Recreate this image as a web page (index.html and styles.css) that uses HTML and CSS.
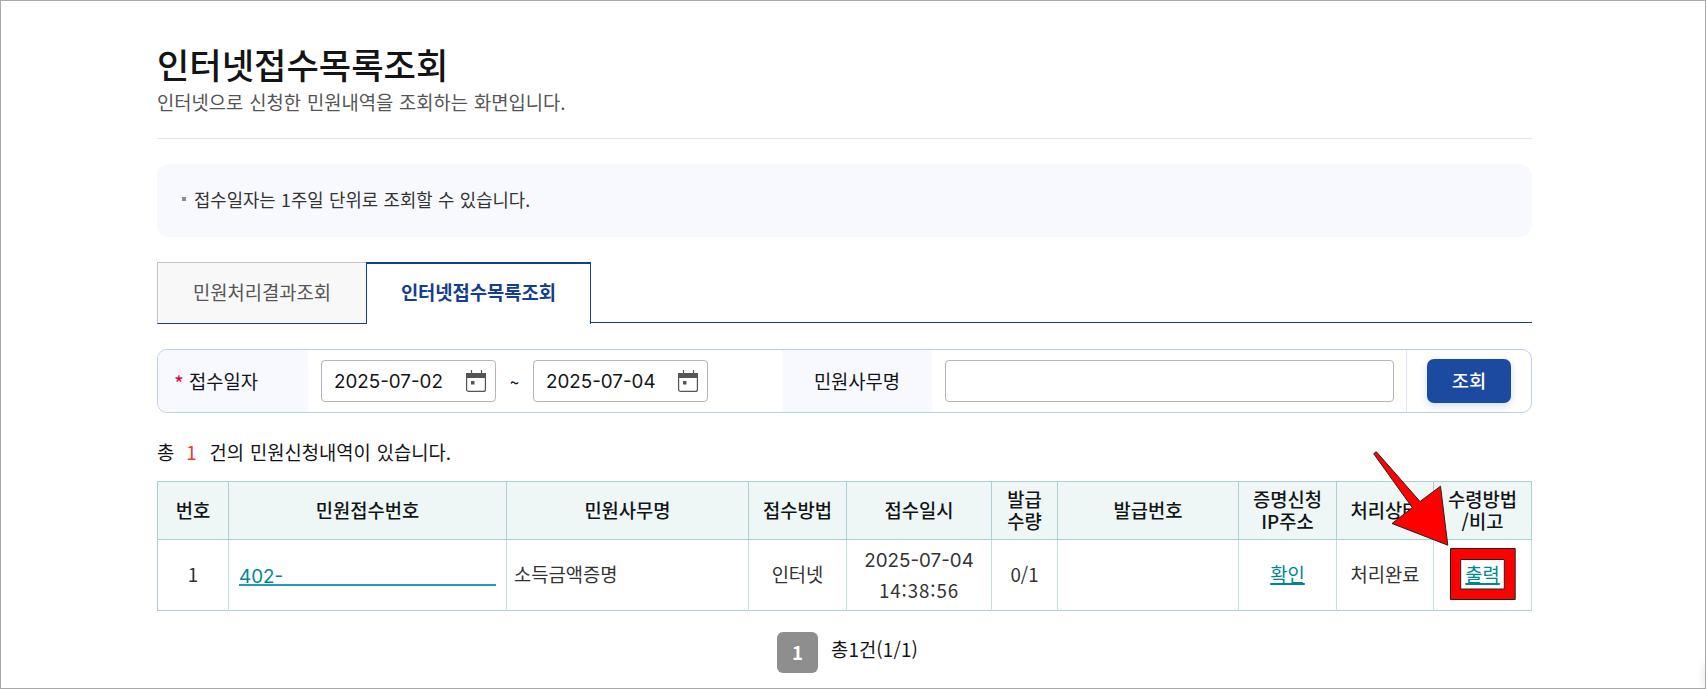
FILE: index.html
```
<!DOCTYPE html>
<html lang="ko">
<head>
    <meta charset="UTF-8">
    <meta name="viewport" content="width=device-width, initial-scale=1.0">
    <title>인터넷접수목록조회</title>
    <link rel="stylesheet" href="styles.css">
</head>
<body>
    <div class="container">
        <header class="page-title">
            <h1>인터넷접수목록조회</h1>
            <p>인터넷으로 신청한 민원내역을 조회하는 화면입니다.</p>
        </header>

        <ul class="notice">
            <li>접수일자는 1주일 단위로 조회할 수 있습니다.</li>
        </ul>

        <nav class="tabs">
            <a class="tab">민원처리결과조회</a>
            <a class="tab active">인터넷접수목록조회</a>
        </nav>

        <!-- 검색 조건 -->
        <form class="search">
            <div class="label label-date"><span class="required">*</span>접수일자</div>
            <div class="dates">
                <div class="date-box">
                    <span class="num">2025-07-02</span>
                    <svg class="calendar" width="20" height="22" viewBox="0 0 20 22">
                        <path d="M5.5 0v4M15.5 0v4" stroke="#555" stroke-width="1.2"/>
                        <rect x=".6" y="3.6" width="18.8" height="17.8" rx="2" fill="none" stroke="#555" stroke-width="1.2"/>
                        <path d="M0 3h20v5H0z" fill="#555"/>
                        <path d="M5 11h3.5v3.5H5z" fill="#555"/>
                    </svg>
                </div>
                <span class="wave">~</span>
                <div class="date-box">
                    <span class="num">2025-07-04</span>
                    <svg class="calendar" width="20" height="22" viewBox="0 0 20 22">
                        <path d="M5.5 0v4M15.5 0v4" stroke="#555" stroke-width="1.2"/>
                        <rect x=".6" y="3.6" width="18.8" height="17.8" rx="2" fill="none" stroke="#555" stroke-width="1.2"/>
                        <path d="M0 3h20v5H0z" fill="#555"/>
                        <path d="M5 11h3.5v3.5H5z" fill="#555"/>
                    </svg>
                </div>
            </div>
            <div class="label label-name">민원사무명</div>
            <div class="name-cell"><input class="name-input" type="text"></div>
            <div class="btn-cell"><button class="btn-search" type="button">조회</button></div>
        </form>

        <p class="count">총 <em>1</em> 건의 민원신청내역이 있습니다.</p>

        <table class="list">
            <colgroup>
                <col class="c1"><col class="c2"><col class="c3"><col class="c4"><col class="c5">
                <col class="c6"><col class="c7"><col class="c8"><col class="c9"><col class="c10">
            </colgroup>
            <thead>
                <tr>
                    <th>번호</th>
                    <th>민원접수번호</th>
                    <th>민원사무명</th>
                    <th>접수방법</th>
                    <th>접수일시</th>
                    <th>발급<br>수량</th>
                    <th>발급번호</th>
                    <th>증명신청<br>IP주소</th>
                    <th>처리상태</th>
                    <th>수령방법<br>/비고</th>
                </tr>
            </thead>
            <tbody>
                <tr>
                    <td>1</td>
                    <td><a class="receipt"><span class="num">402-</span></a></td>
                    <td class="left">소득금액증명</td>
                    <td>인터넷</td>
                    <td class="datetime"><span class="num">2025-07-04</span><br><span class="time">14:38:56</span></td>
                    <td>0/1</td>
                    <td></td>
                    <td><a class="link">확인</a></td>
                    <td>처리완료</td>
                    <td><a class="link">출력</a></td>
                </tr>
            </tbody>
        </table>

        <div class="paging">
            <strong class="page">1</strong>
            <span class="total">총1건(1/1)</span>
        </div>
    </div>

    <!-- 출력 버튼 안내 표시 -->
    <svg class="guide" width="150" height="160" viewBox="1370 445 150 160">
        <path d="M1373.7 453.7L1376.3 451.7L1420 501.5L1440.5 486.2L1447.8 545.2L1392 523.5L1412.3 507.6Z" fill="#f00" stroke="#222" stroke-width="1"/>
        <path d="M1450.5 548.5H1515.2V599.5H1450.5ZM1460.7 559.5V589H1504.3V559.5Z" fill="#f00" fill-rule="evenodd" stroke="#222" stroke-width="1"/>
    </svg>
    <div class="edge-shadow"></div>
</body>
</html>
```
FILE: styles.css
```
* {
    box-sizing: border-box;
}
body {
    margin: 0;
    height: 689px;
    border: 1px solid #aaa;
    position: relative;
    overflow: hidden;
    background: #fff;
    color: #131416;
    font-family: "Noto Sans CJK KR", sans-serif;
    font-size: 18.75px;
    word-spacing: .7px;
}
h1, p, ul {
    margin: 0;
    padding: 0;
}
.container {
    width: 1375px;
    margin-left: 156px;
    padding-top: 38px;
}
.num {
    font-family: Inter, sans-serif;
    font-size: 18.8px;
}

/* 제목 */
.page-title {
    height: 100px;
    border-bottom: 1px solid #e4e5ea;
}
.page-title h1 {
    height: 50px;
    line-height: 49px;
    font-size: 35.2px;
    font-weight: 500;
}
.page-title p {
    line-height: 26px;
    color: #555;
}
.notice {
    height: 73px;
    margin-top: 25px;
    padding: 0 25px;
    display: flex;
    align-items: center;
    list-style: none;
    background: #f8f9ff;
    border-radius: 12px;
    font-size: 17.75px;
    word-spacing: .5px;
    color: #333;
}
.notice li {
    display: flex;
    align-items: center;
    line-height: 28px;
    margin-bottom: 4px;
}
.notice li::before {
    content: "";
    width: 4px;
    height: 4px;
    margin-right: 8px;
    background: #8a8a8a;
}

/* 탭 */
.tabs {
    display: flex;
    height: 62px;
    margin-top: 25px;
    background: linear-gradient(#153e8c, #153e8c) 0 60px / 100% 1px no-repeat;
}
.tab {
    width: 209px;
    height: 62px;
    line-height: 58px;
    text-align: center;
    border: 1px solid #c3c3c3;
    border-right: 0;
    border-bottom-color: #153e8c;
    background: #f8f8f8;
    color: #555;
}
.tab.active {
    width: 225px;
    line-height: 56px;
    border: 1px solid #153e8c;
    border-top-width: 2px;
    border-bottom: 0;
    background: #fff;
    color: #153e8c;
    font-weight: 700;
}

/* 검색 */
.search {
    display: flex;
    height: 64px;
    margin-top: 25px;
    border: 1px solid #bccff0;
    border-radius: 10px;
    overflow: hidden;
}
.label {
    width: 150px;
    padding-bottom: 2px;
    display: flex;
    align-items: center;
    background: #f8f9ff;
}
.label-date {
    padding-left: 16px;
}
.label-name {
    justify-content: center;
}
.required {
    color: #e6003e;
    width: 15px;
    font-size: 21px;
    line-height: 28px;
    padding-top: 6px;
}
.dates {
    width: 474px;
    padding-left: 13px;
    display: flex;
    align-items: center;
}
.date-box {
    width: 175px;
    height: 42px;
    padding: 0 9px 0 12px;
    display: flex;
    align-items: center;
    justify-content: space-between;
    border: 1px solid #b5b5b5;
    border-radius: 4px;
}
.wave {
    width: 37px;
    padding-top: 2px;
    text-align: center;
    font-size: 16px;
    font-weight: 500;
}
.name-cell {
    width: 475px;
    padding-left: 13px;
    display: flex;
    align-items: center;
    border-right: 1px solid #dfe7f8;
}
.name-input {
    width: 449px;
    height: 42px;
    border: 1px solid #b5b5b5;
    border-radius: 4px;
}
.btn-cell {
    flex: 1;
    display: flex;
    align-items: center;
    padding-left: 20px;
}
.btn-search {
    width: 84px;
    height: 44px;
    padding: 0 0 3px;
    border: 0;
    border-radius: 7px;
    background: #1c4aa1;
    color: #fff;
    font: 500 18.7px "Noto Sans CJK KR", sans-serif;
    box-shadow: 0 3px 8px #d3defa;
}

/* 목록 */
.count {
    height: 68px;
    line-height: 78px;
}
.count em {
    font-style: normal;
    color: #f0372d;
    margin: 0 7px 0 6px;
}
.list {
    width: 1375px;
    table-layout: fixed;
    border-collapse: collapse;
    border: 1px solid #abcfd3;
}
.c1 { width: 71px; }
.c2 { width: 278px; }
.c3 { width: 242px; }
.c4 { width: 98px; }
.c5 { width: 145px; }
.c6 { width: 66px; }
.c7 { width: 181px; }
.c8 { width: 98px; }
.c9 { width: 97px; }
.c10 { width: 98px; }
.list th {
    height: 58px;
    padding: 0 0 2px;
    line-height: 22px;
    font-weight: 500;
    background: #eef7f6;
    border: 1px solid #abcfd3;
}
.list td {
    height: 71px;
    padding: 0 0 2px;
    line-height: 30px;
    text-align: center;
    color: #333;
    border-right: 1px solid #c5e0e2;
}
.list td.left {
    text-align: left;
    padding-left: 7px;
}
.list td.datetime {
    line-height: 29px;
}
.receipt {
    display: block;
    height: 22px;
    line-height: 22px;
    margin: 2px 10px 0;
    text-align: left;
    color: #008595;
    border-bottom: 2px solid #1f9daa;
}
.link {
    color: #008595;
    text-decoration: underline 2px;
    text-underline-offset: 1px;
}
.time {
    letter-spacing: .9px;
}
.paging {
    display: flex;
    margin: 21px 0 0 620px;
}
.page {
    width: 41px;
    height: 41px;
    line-height: 39px;
    margin-right: 13px;
    text-align: center;
    border-radius: 6px;
    background: #8e8e8e;
    color: #fff;
}
.total {
    line-height: 33px;
    letter-spacing: .15px;
}

.guide {
    position: absolute;
    left: 1369px;
    top: 444px;
}
.edge-shadow {
    position: absolute;
    right: -6px;
    bottom: 0;
    width: 6px;
    height: 25px;
    box-shadow: 0 0 8px rgba(0, 0, 0, .15);
}
```
